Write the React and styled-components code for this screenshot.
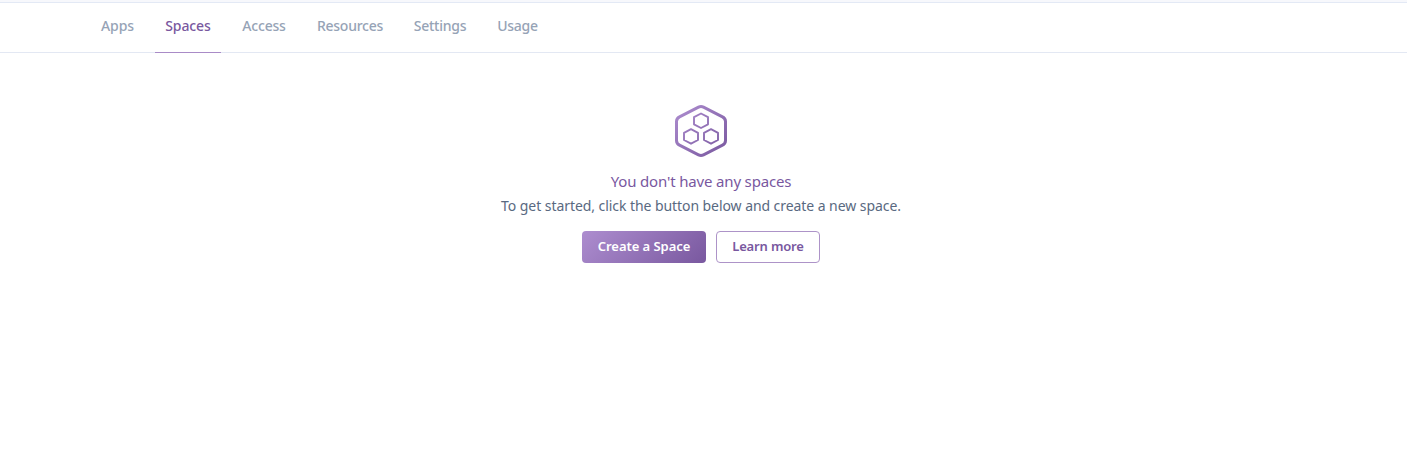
import React from "react";
import styled, { createGlobalStyle } from "styled-components";

const GlobalStyle = createGlobalStyle`
  * { box-sizing: border-box; }
  body {
    margin: 0;
    background: #fff;
    font-family: "Noto Sans", "Open Sans", sans-serif;
  }
`;

const Page = styled.div`
  height: 462px;
  overflow: hidden;
`;

const TopStrip = styled.div`
  height: 3px;
  background: #f7f8fc;
  border-bottom: 1px solid #e3e9f5;
`;

const TabBar = styled.nav`
  display: flex;
  gap: 11px;
  height: 50px;
  padding-left: 91px;
  border-bottom: 1px solid #e3e8f3;
`;

const Tab = styled.a`
  width: ${(p) => p.$width}px;
  height: 50px;
  display: flex;
  justify-content: center;
  white-space: nowrap;
  font-size: 14px;
  font-weight: 500;
  line-height: 46px;
  letter-spacing: ${(p) => p.$tracking}px;
  color: ${(p) => (p.$active ? "#79589f" : "#96a3b6")};
  border-bottom: 1px solid ${(p) => (p.$active ? "#a98bc7" : "transparent")};
`;

const EmptyState = styled.main`
  display: flex;
  flex-direction: column;
  align-items: center;
  padding: 51px 5px 0 0;
`;

const SpacesIcon = styled.svg`
  display: block;
  width: 54px;
  height: 54px;
`;

const Title = styled.h1`
  margin: 11px 0 0;
  font-size: 15px;
  font-weight: 400;
  line-height: 24px;
  letter-spacing: -0.16px;
  color: #79589f;
`;

const Message = styled.p`
  margin: 1px 0 0;
  font-size: 14px;
  line-height: 24px;
  letter-spacing: -0.065px;
  color: #596981;
`;

const Actions = styled.div`
  display: flex;
  gap: 10px;
  margin-top: 13px;
`;

const Button = styled.button`
  width: ${(p) => p.$width}px;
  height: 32px;
  padding: 0 0 2px;
  border-radius: 4px;
  border: ${(p) => (p.$primary ? "0" : "1px solid #ad93c8")};
  background: ${(p) => (p.$primary ? "linear-gradient(135deg, #ad8dcf, #79589f)" : "#fff")};
  color: ${(p) => (p.$primary ? "#fff" : "#79589f")};
  font-family: inherit;
  font-size: 13px;
  font-weight: 600;
  line-height: 28px;
  letter-spacing: ${(p) => (p.$primary ? "-0.05px" : "-0.15px")};
  white-space: nowrap;
`;

const tabs = [
  { label: "Apps", width: 53, tracking: -0.1 },
  { label: "Spaces", width: 66, tracking: -0.1, active: true },
  { label: "Access", width: 64, tracking: -0.2 },
  { label: "Resources", width: 86, tracking: -0.25 },
  { label: "Settings", width: 72, tracking: -0.25 },
  { label: "Usage", width: 61, tracking: -0.25 },
];

export default function App() {
  return (
    <Page>
      <GlobalStyle />
      <TopStrip />
      <TabBar>
        {tabs.map((t) => (
          <Tab key={t.label} $width={t.width} $tracking={t.tracking} $active={t.active}>
            <span>{t.label}</span>
          </Tab>
        ))}
      </TabBar>
      <EmptyState>
        <SpacesIcon viewBox="0 0 54 54" fill="none" stroke="url(#violet)" strokeLinejoin="round">
          <defs>
            <linearGradient id="violet" gradientUnits="userSpaceOnUse" x1="2" y1="2" x2="52" y2="52">
              <stop offset="0" stopColor="#ad8dcf" />
              <stop offset="1" stopColor="#79589f" />
            </linearGradient>
          </defs>
          <path
            strokeWidth="3"
            d="M24.500 3.200 Q27 2 29.500 3.200 L48.500 12.800 Q51.500 14.300 51.500 17.500 V36.500 Q51.500 39.700 48.500 41.200 L29.500 50.800 Q27 52 24.500 50.800 L5.500 41.200 Q2.500 39.700 2.500 36.500 V17.500 Q2.500 14.300 5.500 12.800 Z"
          />
          <g strokeWidth="1.900">
            <path d="M27 9.500 L34 13.200 V20.300 L27 24 L20 20.300 V13.200 Z" />
            <path d="M17 25.200 L24 28.900 V36 L17 39.700 L10 36 V28.900 Z" />
            <path d="M37 25.200 L44 28.900 V36 L37 39.700 L30 36 V28.900 Z" />
          </g>
        </SpacesIcon>
        <Title>You don't have any spaces</Title>
        <Message>To get started, click the button below and create a new space.</Message>
        <Actions>
          <Button $primary $width={124}>Create a Space</Button>
          <Button $width={104}>Learn more</Button>
        </Actions>
      </EmptyState>
    </Page>
  );
}
